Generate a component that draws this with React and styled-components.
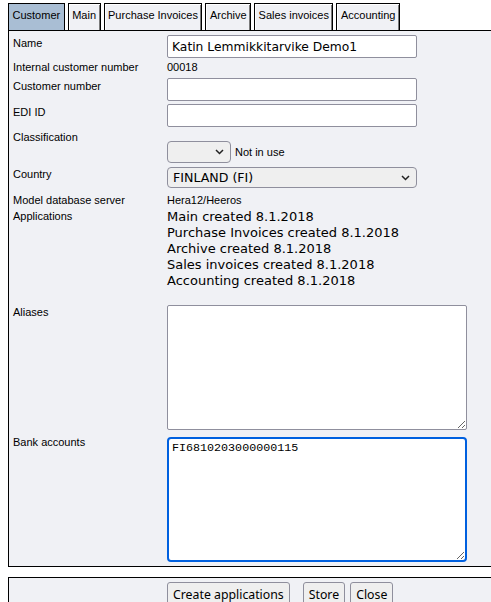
import React, { useEffect, useRef } from "react";
import styled, { createGlobalStyle } from "styled-components";

const GlobalStyle = createGlobalStyle`
  html, body {
    margin: 0;
    padding: 0;
    overflow: hidden;
    background: #ffffff;
  }
  body {
    font-family: "Liberation Sans", Arial, sans-serif;
    font-size: 11px;
    color: #000;
  }
`;

const Page = styled.div`
  padding: 3px 0 0 8px;
  width: 520px;
`;

const TabBar = styled.div`
  display: flex;
  gap: 3px;
  height: 27px;
`;

const Tab = styled.div`
  box-sizing: border-box;
  height: 27px;
  padding: 5px 3.5px 0;
  line-height: 13px;
  font-size: 11px;
  border: 1px solid #000;
  border-bottom: none;
  background: ${(p) => (p.$active ? "#a9bed4" : "#f0f1f5")};
  box-shadow: ${(p) =>
    p.$active ? "none" : "inset 1px 1px 0 #fff, inset -1px 0 0 #7a7a7a"};
  white-space: nowrap;
`;

const Panel = styled.div`
  background: #f0f1f5;
  border: 1px solid #000;
  border-right: none;
  padding: 4px 0 4px 4px;
`;

const Row = styled.div`
  display: flex;
  align-items: flex-start;
  height: ${(p) => p.$h}px;
`;

const Label = styled.div`
  width: 154px;
  flex: none;
  padding-top: 2px;
  line-height: 13px;
  font-size: 11px;
`;

const Value = styled.div`
  padding-top: ${(p) => p.$pt || 0}px;
  line-height: 13px;
  font-size: 11px;
`;

const TextInput = styled.input`
  box-sizing: border-box;
  width: 250px;
  height: 23px;
  margin: 0;
  padding: 1px 4px;
  font-family: "DejaVu Sans", Verdana, sans-serif;
  font-size: 12.3px;
  color: #000;
  background: #fff;
  border: 1px solid #8f8f9d;
  border-radius: 2px;
  outline: none;
`;

const SelectWrap = styled.span`
  position: relative;
  display: inline-block;
  margin-top: ${(p) => p.$mt || 0}px;
  line-height: 0;
`;

const Select = styled.select`
  appearance: none;
  -webkit-appearance: none;
  box-sizing: border-box;
  width: ${(p) => p.$w}px;
  height: ${(p) => p.$h}px;
  margin: 0;
  padding: 0 20px 0 5px;
  font-family: "DejaVu Sans", Verdana, sans-serif;
  font-size: 12.6px;
  color: #000;
  background: #efefef;
  border: 1px solid #8f8f9d;
  border-radius: 4px;
  outline: none;
`;

const Chevron = styled.svg`
  position: absolute;
  right: 7px;
  top: 50%;
  margin-top: -3px;
  pointer-events: none;
`;

const Inline = styled.div`
  display: flex;
  align-items: center;
  gap: 4px;
`;

const AppList = styled.div`
  padding-top: 1px;
  font-family: "DejaVu Sans", Verdana, sans-serif;
  font-size: 13px;
  line-height: 16px;
`;

const TextArea = styled.textarea`
  box-sizing: border-box;
  display: block;
  width: 300px;
  height: 125px;
  margin: ${(p) => p.$mt || 0}px 0 0;
  padding: 2px 3px;
  font-family: "Liberation Mono", "DejaVu Sans Mono", monospace;
  font-size: 11.7px;
  line-height: 14px;
  color: #000;
  background: #fff;
  border: ${(p) => (p.$focused ? "2px solid #0060df" : "1px solid #8f8f9d")};
  border-radius: ${(p) => (p.$focused ? 4 : 2)}px;
  outline: none;
  resize: both;
  caret-color: #000;
`;

const Footer = styled.div`
  margin-top: 10px;
  background: #f0f1f5;
  border-top: 1px solid #000;
  border-left: 1px solid #000;
  padding: 4px 0 0 158px;
  display: flex;
  height: 30px;
`;

const Button = styled.button`
  box-sizing: border-box;
  height: 24px;
  margin: 0 ${(p) => p.$mr || 0}px 0 0;
  padding: 0 5px;
  font-family: "Noto Sans", "Open Sans", sans-serif;
  font-size: 12.3px;
  color: #000;
  background: #efefef;
  border: 1px solid #8f8f9d;
  border-radius: 3px;
`;

const tabs = [
  "Customer",
  "Main",
  "Purchase Invoices",
  "Archive",
  "Sales invoices",
  "Accounting",
];

const apps = [
  "Main created 8.1.2018",
  "Purchase Invoices created 8.1.2018",
  "Archive created 8.1.2018",
  "Sales invoices created 8.1.2018",
  "Accounting created 8.1.2018",
];

function Dropdown({ width, height, mt, children, ...rest }) {
  return (
    <SelectWrap $mt={mt}>
      <Select $w={width} $h={height} {...rest}>
        {children}
      </Select>
      <Chevron width="9" height="6" viewBox="0 0 9 6">
        <polyline
          points="1,1 4.5,4.5 8,1"
          fill="none"
          stroke="#222"
          strokeWidth="1.5"
        />
      </Chevron>
    </SelectWrap>
  );
}

export default function App() {
  const bankRef = useRef(null);

  useEffect(() => {
    const el = bankRef.current;
    if (el) {
      el.focus();
      el.setSelectionRange(el.value.length, el.value.length);
    }
  }, []);

  return (
    <>
      <GlobalStyle />
      <Page>
        <TabBar>
          {tabs.map((t, i) => (
            <Tab key={t} $active={i === 0}>
              {t}
            </Tab>
          ))}
        </TabBar>
        <Panel>
          <Row $h={24}>
            <Label>Name</Label>
            <TextInput defaultValue="Katin Lemmikkitarvike Demo1" />
          </Row>
          <Row $h={19}>
            <Label>Internal customer number</Label>
            <Value $pt={2}>00018</Value>
          </Row>
          <Row $h={26}>
            <Label>Customer number</Label>
            <TextInput defaultValue="" />
          </Row>
          <Row $h={25}>
            <Label>EDI ID</Label>
            <TextInput defaultValue="" />
          </Row>
          <Row $h={37}>
            <Label>Classification</Label>
            <Value $pt={12}>
              <Inline>
                <Dropdown width={64} height={22} defaultValue="">
                  <option value=""></option>
                </Dropdown>
                <span>Not in use</span>
              </Inline>
            </Value>
          </Row>
          <Row $h={26}>
            <Label>Country</Label>
            <Dropdown width={250} height={21} mt={1} defaultValue="FI">
              <option value="FI">FINLAND (FI)</option>
            </Dropdown>
          </Row>
          <Row $h={16}>
            <Label>Model database server</Label>
            <Value $pt={2}>Hera12/Heeros</Value>
          </Row>
          <Row $h={96}>
            <Label>Applications</Label>
            <AppList>
              {apps.map((a) => (
                <div key={a}>{a}</div>
              ))}
            </AppList>
          </Row>
          <Row $h={130}>
            <Label>Aliases</Label>
            <TextArea $mt={1} defaultValue="" />
          </Row>
          <Row $h={128}>
            <Label>Bank accounts</Label>
            <TextArea
              ref={bankRef}
              $mt={3}
              $focused
              defaultValue={"FI6810203000000115\n"}
            />
          </Row>
        </Panel>
        <Footer>
          <Button $mr={13}>Create applications</Button>
          <Button $mr={5}>Store</Button>
          <Button>Close</Button>
        </Footer>
      </Page>
    </>
  );
}
